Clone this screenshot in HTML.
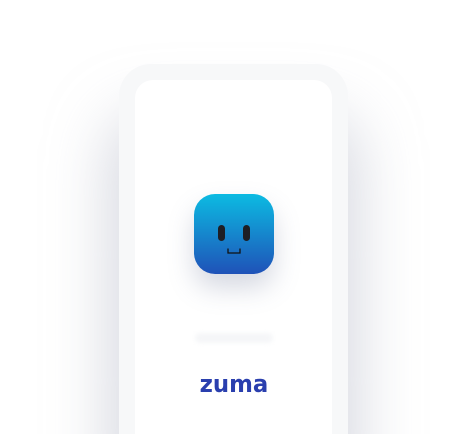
<!DOCTYPE html>
<html><head><style>
html,body{margin:0;padding:0;width:469px;height:434px;overflow:hidden;background:#fff;}
.wrap{position:relative;width:469px;height:434px;overflow:hidden;}
.phone{position:absolute;left:119px;top:64px;width:229px;height:370px;border-radius:32px 32px 0 0;background:#f7f8f9;box-shadow:0 60px 60px 10px rgba(175,180,195,.5);}
.screen{position:absolute;left:135px;top:80px;width:197px;height:354px;border-radius:18px 18px 0 0;background:#fff;}
.icon{position:absolute;left:194px;top:194px;width:80px;height:80px;border-radius:21px;background:linear-gradient(#0cbbe2,#1f52b8);box-shadow:0 14px 26px rgba(120,130,160,.3);}
.eye{position:absolute;top:31px;width:7px;height:16px;border-radius:4px;background:#1e1e24;}
.bar{position:absolute;left:195px;top:333px;width:78px;height:10px;border-radius:5px;background:#f5f6f8;filter:blur(2px);}
.logo{position:absolute;left:184px;top:369px;width:100px;text-align:center;font:bold 24px "DejaVu Sans","Liberation Sans",sans-serif;color:#2a3fae;transform:scaleX(0.95);line-height:30px;}
</style></head><body><div class="wrap">
<div class="phone"></div>
<div class="screen"></div>
<div class="icon">
<div class="eye" style="left:24px"></div>
<div class="eye" style="left:49px"></div>
<svg style="position:absolute;left:33px;top:54px" width="14" height="7"><path d="M1 0.5 V5 H13 V0.5" fill="none" stroke="#111" stroke-width="1.3"/></svg>
</div>
<div class="bar"></div>
<div class="logo">zuma</div>
</div></body></html>
